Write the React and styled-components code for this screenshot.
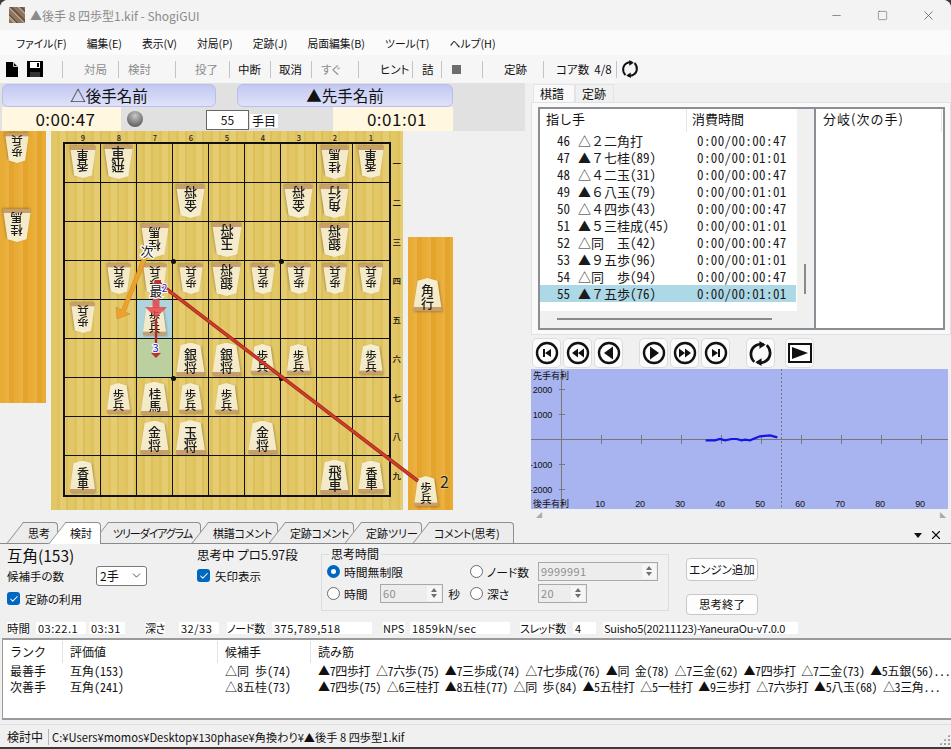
import styled, { createGlobalStyle } from "styled-components";
import { Minus, Square, X, ChevronDown, Check } from "lucide-react";

const GlobalStyle = createGlobalStyle`
  html, body {
    margin: 0;
    width: 951px;
    height: 749px;
    overflow: hidden;
    background: #3d3a3a;
    font-family: "Noto Sans CJK JP", "Noto Sans", sans-serif;
    font-size: 12px;
    color: #111;
    font-feature-settings: "palt" 1;
  }
`;

const Window = styled.div`
  width: 951px;
  height: 747px;
  display: flex;
  flex-direction: column;
  overflow: hidden;
  border-radius: 8px 8px 0 0;
  background: #f0f0f0;
`;

const TitleBar = styled.div`
  height: 30px;
  display: flex;
  align-items: center;
  background: #f3f3f3;
  color: #8b8b8b;
  font-size: 12px;
  padding-left: 9px;
`;
const AppIcon = styled.div`
  width: 16px;
  height: 16px;
  margin-right: 5px;
  background: repeating-linear-gradient(45deg, #8f7560 0 3px, #b79f86 3px 5px, #6d5545 5px 7px);
`;
const TitleText = styled.span`
  flex: 1;
`;
const WinButton = styled.div`
  width: 46px;
  display: flex;
  justify-content: center;
  color: #555;
`;

const MenuBar = styled.div`
  height: 25px;
  display: flex;
  align-items: center;
  gap: 20px;
  padding-left: 16px;
  background: #fbfbfb;
  font-size: 10.8px;
`;

const ToolBar = styled.div`
  height: 28px;
  display: flex;
  align-items: center;
  background: #f6f6f6;
`;
const ToolItem = styled.span`
  flex: none;
  box-sizing: border-box;
  width: ${(p) => p.$w}px;
  padding-left: ${(p) => p.$pad}px;
  white-space: pre;
  font-size: 11.5px;
  color: ${(p) => (p.$off ? "#8c8c8c" : "#111")};
`;
const ToolSep = styled.i`
  flex: none;
  width: 1px;
  height: 17px;
  background: #c4c4c4;
`;
const ToolIcon = styled.div`
  flex: none;
  width: ${(p) => p.$w}px;
  display: flex;
  justify-content: center;
`;
const StopMark = styled.div`
  width: 9px;
  height: 9px;
  margin-right: 12px;
  background: #6d6d6d;
`;

const Main = styled.div`
  height: 437px;
  display: flex;
`;
const LeftPane = styled.div`
  width: 530px;
  flex: none;
`;
const GameBar = styled.div`
  width: 525px;
  height: 48px;
  background: #e1e1e1;
  padding: 1px 0 0 2px;
  box-sizing: border-box;
`;
const NameRow = styled.div`
  display: flex;
  gap: 21px;
  height: 23px;
`;
const NameButton = styled.div`
  width: ${(p) => p.$w}px;
  height: 23px;
  box-sizing: border-box;
  border: 1px solid #b9bdf0;
  border-radius: 6px;
  background: linear-gradient(#c3c8f1, #dfe2f9);
  text-align: center;
  font-size: 15.5px;
  line-height: 21px;
`;
const ClockRow = styled.div`
  display: flex;
  align-items: center;
  height: 24px;
`;
const Clock = styled.div`
  width: ${(p) => p.$w}px;
  height: 24px;
  box-sizing: border-box;
  padding-left: 8px;
  background: #fff7df;
  text-align: center;
  font-size: 17px;
  letter-spacing: 0.5px;
  line-height: 24px;
`;
const Lamp = styled.div`
  width: 16px;
  height: 16px;
  margin: 0 63px 0 6px;
  border-radius: 50%;
  background: radial-gradient(circle at 50% 30%, #c8c8c8, #707070 65%, #4c4c4c);
`;
const MoveBox = styled.div`
  width: 43px;
  height: 20px;
  margin-top: 2px;
  box-sizing: border-box;
  border: 1px solid #666;
  background: #fff;
  text-align: center;
  font-size: 12px;
  line-height: 18px;
`;
const MoveUnit = styled.div`
  width: 28px;
  margin: 4px 55px 0 1px;
  background: #fff;
  font-size: 12px;
  line-height: 14px;
  text-align: center;
`;

const BoardArea = styled.div`
  position: relative;
  display: flex;
  align-items: flex-start;
  gap: 5px;
  height: 379px;
`;
const Stand = styled.div`
  width: ${(p) => p.$w}px;
  height: ${(p) => p.$h}px;
  margin-top: ${(p) => p.$top}px;
  flex: none;
  display: flex;
  flex-direction: column;
  align-items: flex-start;
  box-sizing: border-box;
  background: repeating-linear-gradient(90deg, #e8ac35 0 5px, #eab042 5px 9px, #e5a42c 9px 14px);
`;
const StandSlot = styled.div`
  position: relative;
  margin: ${(p) => p.$top}px 0 0 ${(p) => p.$left}px;
`;
const PieceCount = styled.span`
  position: absolute;
  left: 26px;
  top: -3px;
  font-size: 16px;
  line-height: 18px;
  color: #222;
  text-shadow: 0 0 2px #fff;
`;
const Board = styled.div`
  position: relative;
  width: 352px;
  height: 379px;
  flex: none;
  box-sizing: border-box;
  padding: 13px 14px 15px 14px;
  background: repeating-linear-gradient(90deg, #e2c766 0 6px, #dfc25e 6px 9px, #e5cc70 9px 15px, #dcbe5a 15px 17px);
`;
const Grid = styled.div`
  display: grid;
  grid-template-columns: repeat(9, 36px);
  grid-template-rows: repeat(9, 39px);
  width: 324px;
  height: 351px;
  outline: 2px solid #111;
`;
const Cell = styled.div`
  box-sizing: border-box;
  display: flex;
  align-items: center;
  justify-content: center;
  border-right: ${(p) => (p.$lastCol ? 0 : 1)}px solid #111;
  border-bottom: ${(p) => (p.$lastRow ? 0 : 1)}px solid #111;
  background: ${(p) => p.$bg || "transparent"};
`;
const FileLabel = styled.span`
  position: absolute;
  top: 2px;
  left: ${(p) => p.$x}px;
  width: 36px;
  text-align: center;
  font-size: 7.5px;
  font-weight: 500;
  line-height: 9px;
  color: #222;
`;
const RankLabel = styled.span`
  position: absolute;
  right: 2px;
  top: ${(p) => p.$y}px;
  font-size: 8.5px;
  font-weight: 500;
  line-height: 12px;
  color: #111;
`;
const Star = styled.i`
  position: absolute;
  width: 5px;
  height: 5px;
  border-radius: 50%;
  background: #111;
  left: ${(p) => p.$x - 2}px;
  top: ${(p) => p.$y - 2}px;
`;
const PieceWrap = styled.div`
  flex: none;
  filter: drop-shadow(1px 1px 1px rgba(70, 50, 10, 0.35));
  transform: ${(p) => (p.$gote ? "rotate(180deg) translateY(1px)" : "translateY(1px)")};
`;
const PieceBody = styled.div`
  width: ${(p) => p.$w}px;
  height: ${(p) => p.$h}px;
  box-sizing: border-box;
  padding-top: 3px;
  text-align: center;
  writing-mode: vertical-rl;
  text-orientation: upright;
  clip-path: polygon(50% 0, 84% 8%, 100% 100%, 0 100%, 16% 8%);
  background: linear-gradient(#f6eed2 0, #f3e9c6 88%, #c79e6c 89%);
  font-size: ${(p) => p.$s}px;
  font-weight: 500;
  letter-spacing: -0.5px;
  line-height: ${(p) => p.$w}px;
  white-space: nowrap;
  color: #1c1c1c;
`;
const Overlay = styled.svg`
  position: absolute;
  left: 0;
  top: 0;
  pointer-events: none;
`;

const RightPane = styled.div`
  flex: 1;
  display: flex;
  flex-direction: column;
  padding-left: 1px;
`;
const TabHead = styled.div`
  display: flex;
  height: 19px;
  padding: 1px 0 0 2px;
  box-sizing: border-box;
`;
const KifuTab = styled.div`
  width: ${(p) => p.$w}px;
  box-sizing: border-box;
  padding-left: 6px;
  font-size: 12px;
  line-height: 17px;
  background: ${(p) => (p.$on ? "#f9f9f9" : "#f0f0f0")};
  border: 1px solid #e4e4e4;
  border-bottom: 0;
`;
const TabPage = styled.div`
  height: 233px;
  box-sizing: border-box;
  padding: 4px 0 0 6px;
  background: #f9f9f9;
  border: 1px solid #e2e2e2;
  display: flex;
`;
const ListBox = styled.div`
  box-sizing: border-box;
  height: 223px;
  width: ${(p) => p.$w}px;
  border: 2px solid #8a8f96;
  border-left-width: ${(p) => (p.$first ? 2 : 0)}px;
  background: #fff;
  position: relative;
  display: flex;
  flex-direction: column;
`;
const ListHead = styled.div`
  height: 23px;
  flex: none;
  display: flex;
  align-items: flex-start;
  font-size: 13px;
  font-feature-settings: normal;
`;
const HeadCell = styled.div`
  width: ${(p) => p.$w}px;
  height: 23px;
  box-sizing: border-box;
  padding-left: ${(p) => p.$pad}px;
  line-height: 20px;
  letter-spacing: ${(p) => p.$ls || 0}px;
  border-right: ${(p) => (p.$sep ? "1px solid #e6e6e6" : "none")};
`;
const KifuRow = styled.div`
  display: flex;
  width: 256px;
  height: 17px;
  line-height: 17px;
  font-size: 13px;
  font-feature-settings: normal;
  white-space: pre;
  color: #1a1a1a;
  background: ${(p) => (p.$on ? "#add8e6" : "transparent")};
`;
const Half = styled.span`
  font-feature-settings: "hwid" 1;
`;
const KifuNo = styled(Half)`
  width: 38px;
  padding-left: 17px;
  box-sizing: border-box;
`;
const KifuMove = styled.span`
  width: 119px;
`;
const KifuTime = styled(Half)`
  letter-spacing: 0.4px;
`;
const VScroll = styled.div`
  position: absolute;
  right: 0;
  top: 0;
  bottom: 0;
  width: 17px;
  background: #f0f0f0;
`;
const VThumb = styled.i`
  position: absolute;
  left: 7px;
  top: 155px;
  width: 2px;
  height: 30px;
  background: #8a8a8a;
`;
const HScroll = styled.div`
  position: absolute;
  left: 0;
  right: 0;
  bottom: 0;
  height: 17px;
  background: #f0f0f0;
`;
const HThumb = styled.i`
  position: absolute;
  left: 17px;
  top: 7px;
  width: 215px;
  height: 2px;
  background: #8a8a8a;
`;
const NavRow = styled.div`
  height: 34px;
  display: flex;
  align-items: center;
  padding: 2px 0 0 1px;
  box-sizing: border-box;
`;
const NavButton = styled.div`
  width: 29px;
  height: 30px;
  margin-right: ${(p) => p.$gap ?? 2}px;
  display: flex;
  align-items: center;
  justify-content: center;
  box-sizing: border-box;
  border: 1px solid #dcdcdc;
  border-radius: 5px;
  background: #fbfbfb;
`;
const ChartSvg = styled.svg`
  display: block;
  flex: none;
`;
const ChartScroll = styled.div`
  height: 11px;
  display: flex;
  justify-content: space-between;
  align-items: center;
  padding: 0 5px;
  color: #aaa;
  font-size: 6px;
`;

const DockStrip = styled.div`
  height: 24px;
  display: flex;
  align-items: flex-end;
  box-sizing: border-box;
  border-bottom: 1px solid #8a8a8a;
  padding-left: 24px;
  position: relative;
`;
const DockTab = styled.div`
  position: relative;
  width: ${(p) => p.$w}px;
  flex: none;
  margin: 0 8px 0 0;
  padding-left: 4px;
  font-size: 11px;
  letter-spacing: ${(p) => p.$ls || 0}px;
  line-height: 21px;
  white-space: nowrap;
  box-sizing: border-box;
  border: 1px solid #8f8f8f;
  border-left: 0;
  border-bottom: 0;
  border-top-right-radius: 4px;
  background: ${(p) => (p.$on ? "#fff" : "#ececec")};
  z-index: ${(p) => (p.$on ? 3 : 1)};
  height: ${(p) => (p.$on ? 22 : 21)}px;
  margin-bottom: ${(p) => (p.$on ? -1 : 0)}px;
  &::before {
    content: "";
    position: absolute;
    left: -9px;
    top: -1px;
    bottom: 0;
    width: 18px;
    box-sizing: border-box;
    transform: skewX(-38deg);
    border-left: 1px solid #8f8f8f;
    border-top: 1px solid #8f8f8f;
    background: inherit;
    z-index: -1;
  }
`;
const DockTools = styled.div`
  position: absolute;
  right: 8px;
  bottom: 1px;
  display: flex;
  align-items: center;
  gap: 7px;
`;
const DockArrow = styled.i`
  width: 0;
  height: 0;
  border: 4px solid transparent;
  border-top: 5px solid #111;
  border-bottom: 0;
`;

const Analysis = styled.div`
  height: 176px;
  display: flex;
  flex-direction: column;
`;
const Controls = styled.div`
  height: 74px;
  display: flex;
  padding-left: 7px;
  box-sizing: border-box;
`;
const ColA = styled.div`
  width: ${(p) => p.$w}px;
  flex: none;
  display: flex;
  flex-direction: column;
`;
const BigText = styled.div`
  height: 20px;
  font-size: ${(p) => p.$s}px;
  line-height: 22px;
`;
const FormRow = styled.div`
  display: flex;
  align-items: center;
  gap: 5px;
  height: ${(p) => p.$h || 23}px;
  font-size: 11.5px;
`;
const SelectBox = styled.div`
  width: 51px;
  height: 20px;
  margin-left: 27px;
  box-sizing: border-box;
  padding: 0 3px;
  display: flex;
  align-items: center;
  justify-content: space-between;
  background: #fff;
  border: 1px solid #7a7a7a;
  border-radius: 3px;
  font-size: 12px;
`;
const CheckMark = styled.div`
  width: 13px;
  height: 13px;
  flex: none;
  border-radius: 3px;
  background: #0067c0;
  color: #fff;
  display: flex;
  align-items: center;
  justify-content: center;
`;
const Group = styled.fieldset`
  width: 348px;
  height: 64px;
  flex: none;
  box-sizing: border-box;
  margin: 3px 17px 0 0;
  padding: 0 0 0 5px;
  border: 1px solid #dcdcdc;
  font-size: 11.8px;
`;
const GroupTitle = styled.legend`
  margin-left: 2px;
  padding: 0 2px;
  font-size: 12px;
  line-height: 14px;
`;
const GroupGrid = styled.div`
  display: grid;
  grid-template-columns: 143px 1fr;
  grid-template-rows: 22px 22px;
  margin-top: -1px;
`;
const OptionRow = styled.div`
  display: flex;
  align-items: center;
  white-space: pre;
`;
const Radio = styled.i`
  width: 13px;
  height: 13px;
  flex: none;
  box-sizing: border-box;
  margin-right: 4px;
  border-radius: 50%;
  background: #fff;
  border: ${(p) => (p.$on ? "4px solid #0067c0" : "1px solid #6a6a6a")};
`;
const OptionLabel = styled.span`
  width: ${(p) => p.$w}px;
  flex: none;
`;
const SpinBox = styled.div`
  width: ${(p) => p.$w}px;
  height: 19px;
  flex: none;
  box-sizing: border-box;
  border: 1px solid #a9a9a9;
  background: #ededed;
  color: #8d8d8d;
  display: flex;
  align-items: center;
  justify-content: space-between;
  padding-left: 2px;
  font-size: 11px;
  letter-spacing: 0.4px;
`;
const SpinArrows = styled.div`
  width: 14px;
  height: 15px;
  margin-right: 1px;
  background: #f6f6f6;
  display: flex;
  flex-direction: column;
  align-items: center;
  justify-content: space-evenly;
`;
const SpinArrow = styled.i`
  width: 0;
  height: 0;
  border: 3px solid transparent;
  border-bottom: 4px solid #707070;
  border-top: 0;
  transform: ${(p) => (p.$down ? "rotate(180deg)" : "none")};
`;
const ButtonCol = styled.div`
  display: flex;
  flex-direction: column;
  gap: 13px;
  padding-top: 14px;
`;
const PushButton = styled.div`
  width: 72px;
  height: ${(p) => p.$h}px;
  box-sizing: border-box;
  border: 1px solid #c8c8c8;
  border-radius: 4px;
  background: #fdfdfd;
  text-align: center;
  font-size: 11.5px;
  line-height: ${(p) => p.$h - 2}px;
`;
const StatRow = styled.div`
  height: 20px;
  display: flex;
  align-items: center;
  padding-left: 7px;
`;
const Stat = styled.span`
  flex: none;
  width: ${(p) => p.$w}px;
  margin-left: ${(p) => p.$ml || 0}px;
  height: 12px;
  line-height: 12px;
  background: #fff;
  white-space: nowrap;
  padding-left: ${(p) => p.$pad || 0}px;
  box-sizing: border-box;
  font-size: ${(p) => p.$s || 11}px;
  letter-spacing: ${(p) => p.$ls || 0}px;
`;
const TableBox = styled.div`
  height: 82px;
  margin-left: 2px;
  box-sizing: border-box;
  background: #fff;
  border-top: 2px solid #9a9a9a;
  border-bottom: 2px solid #9a9a9a;
  border-left: 1px solid #9a9a9a;
  padding-top: 1px;
`;
const TableRow = styled.div`
  display: grid;
  grid-template-columns: 60px 155px 93px 1fr;
  height: ${(p) => p.$h}px;
  font-size: 12px;
  line-height: ${(p) => p.$h}px;
  white-space: nowrap;
  overflow: hidden;
  color: #111;
  font-feature-settings: "hwid" 1;
`;
const TableCell = styled.div`
  padding-left: 7px;
  letter-spacing: ${(p) => p.$ls || 0}px;
  border-right: ${(p) => (p.$sep ? "1px solid #e4e4e4" : "none")};
`;
const StatusBar = styled.div`
  flex: 1;
  display: flex;
  align-items: center;
  padding: 6px 0 0 7px;
  position: relative;
  box-sizing: border-box;
  font-size: 12px;
  &::before {
    content: "";
    position: absolute;
    left: 0;
    right: 0;
    top: 4px;
    height: 1px;
    background: #e0e0e0;
  }
`;
const StatusPath = styled.span`
  font-size: 11.2px;
`;
const StatusSep = styled.i`
  width: 1px;
  height: 16px;
  margin: 0 3px 0 5px;
  background: #b5b5b5;
`;
const Grip = styled.div`
  position: absolute;
  right: 1px;
  bottom: 2px;
  width: 11px;
  height: 11px;
  background: radial-gradient(circle, #a0a0a0 1px, transparent 1.2px) 0 0 / 4px 4px;
  clip-path: polygon(100% 0, 100% 100%, 0 100%);
`;

const PIECES = {
  歩: ["歩兵", 24, 30, 11.5],
  香: ["香車", 26, 32, 12],
  桂: ["桂馬", 28, 33, 12.5],
  銀: ["銀将", 29, 33, 13],
  金: ["金将", 29, 33, 13],
  角: ["角行", 29, 33, 13],
  飛: ["飛車", 29, 34, 13.5],
  玉: ["玉将", 30, 34, 13.5],
};

const BOARD = [
  "v香 v飛 . . . . . v桂 v香",
  ". . . v金 . . v金 v角 .",
  ". . v桂 . v玉 . . v銀 .",
  ". v歩 v歩 v歩 v銀 v歩 v歩 v歩 v歩",
  "v歩 . 歩 . . . . . .",
  ". . . 銀 銀 歩 歩 . 歩",
  ". 歩 桂 歩 歩 . . . .",
  ". . 金 玉 . 金 . . .",
  "香 . . . . . . 飛 香",
];

const KIFU = [
  ["46", "△２二角打", "0:00/00:00:47"],
  ["47", "▲７七桂(89)", "0:00/00:01:01"],
  ["48", "△４二玉(31)", "0:00/00:00:47"],
  ["49", "▲６八玉(79)", "0:00/00:01:01"],
  ["50", "△４四歩(43)", "0:00/00:00:47"],
  ["51", "▲５三桂成(45)", "0:00/00:01:01"],
  ["52", "△同　玉(42)", "0:00/00:00:47"],
  ["53", "▲９五歩(96)", "0:00/00:01:01"],
  ["54", "△同　歩(94)", "0:00/00:00:47"],
  ["55", "▲７五歩(76)", "0:00/00:01:01"],
];

// width, left padding, text, disabled; "|" is a separator
const TOOLS = [
  "file",
  "disk",
  [16, 0, ""],
  "|",
  [55, 21, "対局", true],
  "|",
  [56, 9, "検討", true],
  "|",
  [53, 19, "投了", true],
  "|",
  [40, 8, "中断"],
  "|",
  [40, 8, "取消"],
  "|",
  [46, 9, "すぐ", true],
  "|",
  [53, 21, "ヒント"],
  "|",
  [28, 9, "詰"],
  "|",
  "stop",
  "|",
  [60, 21, "定跡"],
  "|",
  [72, 12, "コア数  4/8"],
  "|",
  "cycle",
];

const MENUS = ["ファイル(F)", "編集(E)", "表示(V)", "対局(P)", "定跡(J)", "局面編集(B)", "ツール(T)", "ヘルプ(H)"];
const DOCK_TABS = [
  ["思考", 34, 0],
  ["検討", 35, 0, true],
  ["ツリーダイアグラム", 92, -1.1],
  ["棋譜コメント", 69, -0.2],
  ["定跡コメント", 68, -0.2],
  ["定跡ツリー", 60, 0],
  ["コメント(思考)", 84, -0.3],
];
const RANKS = ["一", "二", "三", "四", "五", "六", "七", "八", "九"];
const CURVE = [
  [527, 226], [555, 226], [570, 222], [585, 226], [605, 222], [620, 222], [635, 226],
  [645, 224], [660, 226], [675, 220], [690, 214], [720, 211], [742, 217],
].map(([x, y]) => `${530 + x / 3},${365 + y / 3}`).join(" ");

const Piece = ({ name, gote }) => {
  const [text, w, h, s] = PIECES[name];
  return (
    <PieceWrap $gote={gote}>
      <PieceBody $w={w} $h={h} $s={s}>{text}</PieceBody>
    </PieceWrap>
  );
};

const FileIcon = () => (
  <svg width="12" height="15" viewBox="0 0 12 15">
    <path d="M0 0h7l5 5v10H0z" fill="#000" />
    <path d="M7.500 .5v4h4" fill="none" stroke="#fff" strokeWidth=".8" />
  </svg>
);
const DiskIcon = () => (
  <svg width="16" height="16" viewBox="0 0 16 16">
    <path d="M0 0h16v16H0z" fill="#000" />
    <path d="M3 1h10v6H3z" fill="#fff" />
    <path d="M10 2h2v4h-2z" fill="#000" />
    <path d="M3 11h10v5H3z" fill="#333" />
  </svg>
);
const CycleIcon = ({ size }) => (
  <svg width={size} height={size} viewBox="0 0 24 24" fill="none" stroke="#111" strokeWidth="2.6">
    <path d="M6 20 C1 15 2 7 8 4 C11 2.6 13 3 15 3.500" />
    <path d="M18 4 C23 9 22 17 16 20 C13 21.400 11 21 9 20.500" />
    <path d="M11 0 L17 3.500 L11 7.500z" fill="#111" stroke="none" />
    <path d="M13 24 L7 20.500 L13 16.500z" fill="#111" stroke="none" />
  </svg>
);
const NavIcon = ({ glyph }) => (
  <svg width="24" height="24" viewBox="0 0 24 24">
    <circle cx="12" cy="12" r="10" fill="#fff" stroke="#111" strokeWidth="2.4" />
    <path d={glyph} fill="#111" />
  </svg>
);
const PlayBox = () => (
  <svg width="24" height="20" viewBox="0 0 24 20">
    <rect x="1" y="1" width="22" height="18" fill="#fff" stroke="#111" strokeWidth="2" />
    <path d="M4 4L20 10L4 16z" fill="#111" />
  </svg>
);

const NAV_GLYPHS = [
  ["M8 8h2v8H8zM16 8v8l-6-4z", 2],
  ["M6 12l6-4.500v9zM12 12l6-4.500v9z", 2],
  ["M7 12l9-6.500v13z", 16],
  ["M17 12l-9-6.500v13z", 2],
  ["M18 12l-6-4.500v9zM12 12l-6-4.500v9z", 2],
  ["M14 8h2v8h-2zM8 8v8l6-4z", 16],
];

const Arrows = () => (
  <Overlay width="530" height="379" viewBox="0 131 530 379">
    <g fontFamily="'Noto Sans CJK JP', sans-serif">
      <path d="M117 319L116 307L121.500 310L144 254L148 256L125 312L130 314z" fill="#eda12f" stroke="#c98624" strokeWidth=".5" />
      <path d="M156 283V308" stroke="#e0464a" strokeWidth="7" opacity=".85" />
      <path d="M145 307H167L156 318z" fill="#e0464a" opacity=".85" />
      <path d="M156 319V354" stroke="#b02a2a" strokeWidth="2.4" />
      <path d="M151 353H161L156 358z" fill="#c03030" />
      <path d="M160 284L418 481" stroke="#a82a1c" strokeWidth="3.600" />
      <path d="M160 284L418 481" stroke="#d0402e" strokeWidth="1.600" />
      <rect x="155" y="280" width="6" height="5" fill="#c03030" />
      <text x="147" y="256" textAnchor="middle" fontSize="13" fill="#111" stroke="#fff" strokeWidth="2.400" paintOrder="stroke">次</text>
      <text x="156" y="296" textAnchor="middle" fontSize="13" fill="#111" stroke="#fff" strokeWidth="2.400" paintOrder="stroke">最</text>
      <text x="164.500" y="292" textAnchor="middle" fontSize="10" fill="#1414e6" stroke="#fff" strokeWidth="2" paintOrder="stroke">2</text>
      <text x="155.500" y="352" textAnchor="middle" fontSize="11" fill="#1414e6" stroke="#fff" strokeWidth="2" paintOrder="stroke">3</text>
    </g>
  </Overlay>
);

const Chart = () => (
  <ChartSvg width="417" height="140" viewBox="531 369 417 140">
    <rect x="531" y="369" width="417" height="140" fill="#a8b4ef" />
    <g stroke="#777" strokeWidth="1">
      <path d="M531 439.500H948M561.500 369V509" />
      {[1, 2, 3, 4, 5, 6, 7, 8, 9].map((n) => (
        <path key={n} d={`M${561.5 + n * 40} 435V444`} />
      ))}
      {[389, 414, 464, 489].map((y) => (
        <path key={y} d={`M559 ${y + 0.5}H565`} />
      ))}
      <path d="M781.500 369V509" strokeDasharray="2 2" />
    </g>
    <polyline points={CURVE} fill="none" stroke="#1414e6" strokeWidth="2.200" />
    <g fontFamily="'Liberation Sans', sans-serif" fontSize="9" letterSpacing="-0.2" fill="#111">
      {[[2000, 393], [1000, 418], [-1000, 468], [-2000, 493]].map(([v, y]) => (
        <text key={v} x="552" y={y} textAnchor="end">{v}</text>
      ))}
      {[1, 2, 3, 4, 5, 6, 7, 8, 9].map((n) => (
        <text key={n} x={560 + n * 40} y="507" textAnchor="middle">{n * 10}</text>
      ))}
    </g>
    <g fontFamily="'Noto Sans CJK JP', sans-serif" fontSize="9" fill="#111">
      <text x="533" y="379">先手有利</text>
      <text x="533" y="507">後手有利</text>
    </g>
  </ChartSvg>
);

const MoveText = ({ text }) => {
  const [head, tail] = text.split("(");
  return (
    <KifuMove>
      {head}
      {tail && <Half>({tail}</Half>}
    </KifuMove>
  );
};

const App = () => {
  return (
    <>
      <GlobalStyle />
      <Window>
        <TitleBar>
          <AppIcon />
          <TitleText>▲後手 8 四歩型1.kif - ShogiGUI</TitleText>
          <WinButton><Minus size={13} strokeWidth={1.2} /></WinButton>
          <WinButton><Square size={11} strokeWidth={1.2} /></WinButton>
          <WinButton><X size={15} strokeWidth={1.2} /></WinButton>
        </TitleBar>
        <MenuBar>
          {MENUS.map((m) => <span key={m}>{m}</span>)}
        </MenuBar>
        <ToolBar>
          {TOOLS.map((t, i) => {
            if (t === "|") return <ToolSep key={i} />;
            if (t === "file") return <ToolIcon key={i} $w={24}><FileIcon /></ToolIcon>;
            if (t === "disk") return <ToolIcon key={i} $w={22}><DiskIcon /></ToolIcon>;
            if (t === "stop") return <ToolIcon key={i} $w={40}><StopMark /></ToolIcon>;
            if (t === "cycle") return <ToolIcon key={i} $w={26}><CycleIcon size={18} /></ToolIcon>;
            const [w, pad, text, off] = t;
            return <ToolItem key={i} $w={w} $pad={pad} $off={off}>{text}</ToolItem>;
          })}
        </ToolBar>
        <Main>
          <LeftPane>
            <GameBar>
              <NameRow>
                <NameButton $w={214}>△後手名前</NameButton>
                <NameButton $w={216}>▲先手名前</NameButton>
              </NameRow>
              <ClockRow>
                <Clock $w={119}>0:00:47</Clock>
                <Lamp />
                <MoveBox>55</MoveBox>
                <MoveUnit>手目</MoveUnit>
                <Clock $w={120}>0:01:01</Clock>
              </ClockRow>
            </GameBar>
            <BoardArea>
              <Stand $w={46} $h={272} $top={0}>
                <StandSlot $top={3} $left={5}><Piece name="歩" gote /></StandSlot>
                <StandSlot $top={46} $left={3}><Piece name="桂" gote /></StandSlot>
              </Stand>
              <Board>
                {[9, 8, 7, 6, 5, 4, 3, 2, 1].map((n, i) => (
                  <FileLabel key={n} $x={14 + i * 36}>{n}</FileLabel>
                ))}
                {RANKS.map((r, i) => (
                  <RankLabel key={r} $y={26 + i * 39}>{r}</RankLabel>
                ))}
                <Grid>
                  {BOARD.flatMap((row, y) =>
                    row.split(" ").map((tok, x) => {
                      const bg = x === 2 && y === 4 ? "#aed4dc" : x === 2 && y === 5 ? "#bccf9f" : null;
                      return (
                        <Cell key={`${x}-${y}`} $bg={bg} $lastCol={x === 8} $lastRow={y === 8}>
                          {tok !== "." && <Piece name={tok.replace("v", "")} gote={tok[0] === "v"} />}
                        </Cell>
                      );
                    })
                  )}
                </Grid>
                <Star $x={122} $y={130} />
                <Star $x={230} $y={130} />
                <Star $x={122} $y={247} />
                <Star $x={230} $y={247} />
              </Board>
              <Stand $w={45} $h={273} $top={106}>
                <StandSlot $top={40} $left={5}><Piece name="角" /></StandSlot>
                <StandSlot $top={165} $left={6}>
                  <Piece name="歩" />
                  <PieceCount>2</PieceCount>
                </StandSlot>
              </Stand>
              <Arrows />
            </BoardArea>
          </LeftPane>
          <RightPane>
            <TabHead>
              <KifuTab $w={42} $on>棋譜</KifuTab>
              <KifuTab $w={39}>定跡</KifuTab>
            </TabHead>
            <TabPage>
              <ListBox $w={278} $first>
                <ListHead>
                  <HeadCell $w={147} $pad={6} $sep>指し手</HeadCell>
                  <HeadCell $w={110} $pad={5}>消費時間</HeadCell>
                </ListHead>
                {KIFU.map(([no, move, time], i) => (
                  <KifuRow key={no} $on={i === 9}>
                    <KifuNo>{no}</KifuNo>
                    <MoveText text={move} />
                    <KifuTime>{time}</KifuTime>
                  </KifuRow>
                ))}
                <VScroll><VThumb /></VScroll>
                <HScroll><HThumb /></HScroll>
              </ListBox>
              <ListBox $w={129}>
                <ListHead>
                  <HeadCell $w={126} $pad={7} $ls={1} $sep>分岐(次の手)</HeadCell>
                </ListHead>
              </ListBox>
            </TabPage>
            <NavRow>
              {NAV_GLYPHS.map(([g, gap], i) => (
                <NavButton key={i} $gap={gap}><NavIcon glyph={g} /></NavButton>
              ))}
              <NavButton $gap={10}><CycleIcon size={25} /></NavButton>
              <NavButton $gap={0}><PlayBox /></NavButton>
            </NavRow>
            <Chart />
            <ChartScroll><span>◢</span><span>◣</span></ChartScroll>
          </RightPane>
        </Main>
        <DockStrip>
          {DOCK_TABS.map(([t, w, ls, on]) => (
            <DockTab key={t} $w={w} $ls={ls} $on={on}>{t}</DockTab>
          ))}
          <DockTools>
            <DockArrow />
            <X size={14} strokeWidth={2} color="#111" />
          </DockTools>
        </DockStrip>
        <Analysis>
          <Controls>
            <ColA $w={190}>
              <BigText $s={15.5}>互角(153)</BigText>
              <FormRow>
                候補手の数
                <SelectBox>2手<ChevronDown size={13} strokeWidth={1.3} /></SelectBox>
              </FormRow>
              <FormRow>
                <CheckMark><Check size={10} strokeWidth={2.5} /></CheckMark>
                定跡の利用
              </FormRow>
            </ColA>
            <ColA $w={124}>
              <BigText $s={12.5}>思考中 プロ5.97段</BigText>
              <FormRow>
                <CheckMark><Check size={10} strokeWidth={2.5} /></CheckMark>
                矢印表示
              </FormRow>
            </ColA>
            <Group>
              <GroupTitle>思考時間</GroupTitle>
              <GroupGrid>
                <OptionRow>
                  <Radio $on />
                  <span>時間無制限</span>
                </OptionRow>
                <OptionRow>
                  <Radio />
                  <OptionLabel $w={51}>ノード数</OptionLabel>
                  <SpinBox $w={120}>9999991<SpinArrows><SpinArrow /><SpinArrow $down /></SpinArrows></SpinBox>
                </OptionRow>
                <OptionRow>
                  <Radio />
                  <OptionLabel $w={36}>時間</OptionLabel>
                  <SpinBox $w={63}>60<SpinArrows><SpinArrow /><SpinArrow $down /></SpinArrows></SpinBox>
                  <OptionLabel $w={27}>  秒</OptionLabel>
                </OptionRow>
                <OptionRow>
                  <Radio />
                  <OptionLabel $w={51}>深さ</OptionLabel>
                  <SpinBox $w={49}>20<SpinArrows><SpinArrow /><SpinArrow $down /></SpinArrows></SpinBox>
                </OptionRow>
              </GroupGrid>
            </Group>
            <ButtonCol>
              <PushButton $h={23}>エンジン追加</PushButton>
              <PushButton $h={21}>思考終了</PushButton>
            </ButtonCol>
          </Controls>
          <StatRow>
            <Stat $w={23} $s={11.5}>時間</Stat>
            <Stat $w={50} $ml={6} $pad={2} $ls={0.5}>03:22.1</Stat>
            <Stat $w={36} $ml={3} $pad={2} $ls={0.5}>03:31</Stat>
            <Stat $w={20} $ml={20} $ls={-0.5}>深さ</Stat>
            <Stat $w={40} $ml={14} $pad={2} $ls={0.5}>32/33</Stat>
            <Stat $w={39} $ml={8} $ls={-0.3}>ノード数</Stat>
            <Stat $w={100} $ml={6} $pad={2} $ls={0.5}>375,789,518</Stat>
            <Stat $w={22} $ml={11}>NPS</Stat>
            <Stat $w={100} $ml={5} $pad={2} $ls={0.5}>1859kN/sec</Stat>
            <Stat $w={47} $ml={10} $ls={-0.4}>スレッド数</Stat>
            <Stat $w={23} $ml={6} $pad={2}>4</Stat>
            <Stat $w={195} $ml={7} $pad={1} $ls={-0.25}>Suisho5(20211123)-YaneuraOu-v7.0.0</Stat>
          </StatRow>
          <TableBox>
            <TableRow $h={22}>
              <TableCell $sep>ランク</TableCell>
              <TableCell $sep>評価値</TableCell>
              <TableCell $sep>候補手</TableCell>
              <TableCell>読み筋</TableCell>
            </TableRow>
            <TableRow $h={16}>
              <TableCell>最善手</TableCell>
              <TableCell>互角(153)</TableCell>
              <TableCell>△同　歩(74)</TableCell>
              <TableCell $ls={-0.35}>▲7四歩打 △7六歩(75) ▲7三歩成(74) △7七歩成(76) ▲同　金(78) △7三金(62) ▲7四歩打 △7二金(73) ▲5五銀(56)...</TableCell>
            </TableRow>
            <TableRow $h={16}>
              <TableCell>次善手</TableCell>
              <TableCell>互角(241)</TableCell>
              <TableCell>△8五桂(73)</TableCell>
              <TableCell $ls={-0.35}>▲7四歩(75) △6三桂打 ▲8五桂(77) △同　歩(84) ▲5五桂打 △5一桂打 ▲9三歩打 △7六歩打 ▲5八玉(68) △3三角...</TableCell>
            </TableRow>
          </TableBox>
        </Analysis>
        <StatusBar>
          <span>検討中</span>
          <StatusSep />
          <StatusPath>C:¥Users¥momos¥Desktop¥130phase¥角換わり¥▲後手 8 四歩型1.kif</StatusPath>
          <Grip />
        </StatusBar>
      </Window>
    </>
  );
};

export default App;
